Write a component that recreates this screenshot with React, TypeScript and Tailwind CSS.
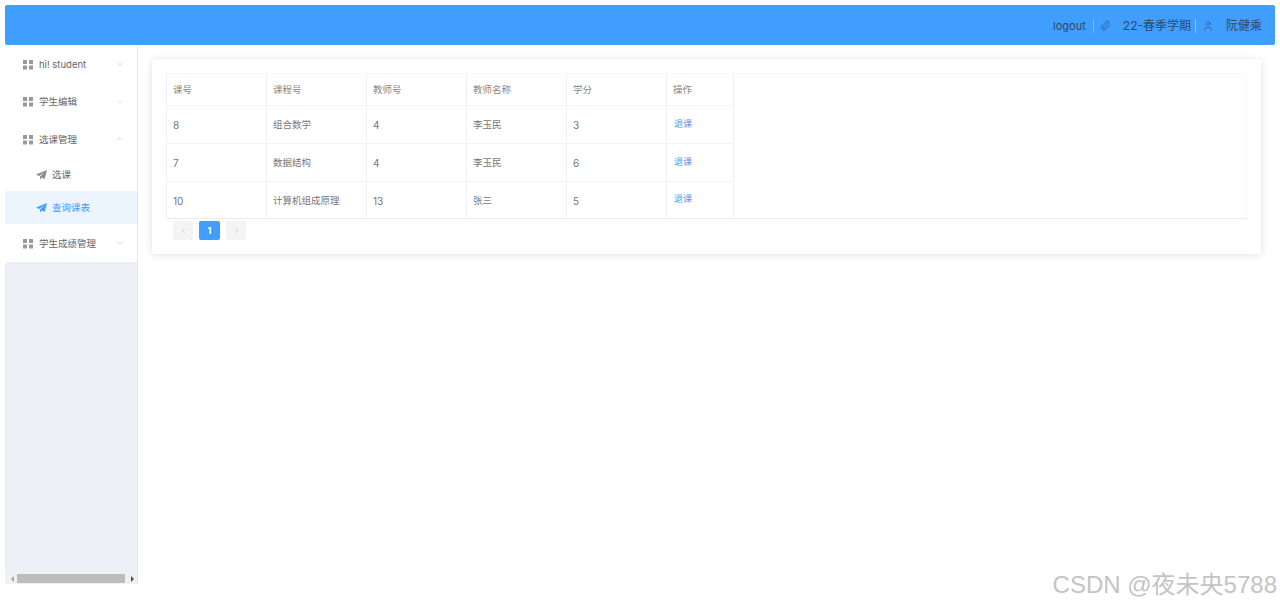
import { ChevronDown, ChevronLeft, ChevronRight, ChevronUp, Paperclip, User } from "lucide-react";
import type { ReactNode } from "react";

const font = "font-['Inter','Noto_Sans_CJK_SC',sans-serif]";

const rows = [
  { no: "8", name: "组合数学", tid: "4", teacher: "李玉民", score: "3", h: "h-[38px]" },
  { no: "7", name: "数据结构", tid: "4", teacher: "李玉民", score: "6", h: "h-[38px]" },
  { no: "10", name: "计算机组成原理", tid: "13", teacher: "张三", score: "5", h: "h-[37px]" },
];

const headers = ["课号", "课程号", "教师号", "教师名称", "学分"];

const Grid = () => (
  <svg width="11" height="11" viewBox="0 0 11 11" className="shrink-0" fill="#999">
    <rect x="0" y="1" width="4" height="4" />
    <rect x="6" y="1" width="4" height="4" />
    <rect x="0" y="6.5" width="4" height="4" />
    <rect x="6" y="6.5" width="4" height="4" />
  </svg>
);

const Plane = ({ color }: { color: string }) => (
  <svg width="11" height="11" viewBox="0 0 11 11" className="shrink-0" fill={color}>
    <path d="M11 1 L0 5.5 L3 7 L9 3 L4 7.6 L4.2 10.5 L6 8.6 L8.6 10 Z" />
  </svg>
);

const MenuGroup = ({ label, open, h }: { label: string; open?: boolean; h: string }) => (
  <div className={`flex items-center pl-[18px] pr-[12px] ${h}`}>
    <Grid />
    <span className="ml-[5px] pt-[2px] text-[9.5px] text-[#666] flex-1">{label}</span>
    {open ? (
      <ChevronUp size={10} strokeWidth={1} className="text-[#aaa]" />
    ) : (
      <ChevronDown size={10} strokeWidth={1} className="text-[#aaa]" />
    )}
  </div>
);

const SubItem = ({ label, active, h }: { label: string; active?: boolean; h: string }) => (
  <div className={`flex items-center pl-[31px] ${h} ${active ? "bg-[#ecf4fd] text-[#409eff]" : "text-[#666]"}`}>
    <Plane color={active ? "#409eff" : "#888"} />
    <span className="ml-[5px] pt-[2px] text-[9.5px]">{label}</span>
  </div>
);

const Cell = ({ children, head, digits }: { children: ReactNode; head?: boolean; digits?: boolean }) => (
  <div className={`w-[100px] h-full flex items-center pl-[6px] pt-[2px] border-l border-[#f0f1f4] ${digits ? "text-[10px]" : "text-[9.5px]"} ${head ? "text-[#888]" : "text-[#777]"}`}>
    {children}
  </div>
);

export default function App() {
  return (
    <div className={`${font} relative w-[1280px] h-[607px] overflow-hidden bg-white p-[5px] pb-[23px] flex flex-col`}>
      <header className="h-[40px] shrink-0 bg-[#409eff] rounded-[2px] flex items-center justify-end pr-[13px] pt-[1px] text-[12px] text-[#2e4a68]">
        <span className="text-[11px] pt-[2px]">logout</span>
        <span className="w-px h-[14px] bg-[#7dbcff] ml-[7px]" />
        <Paperclip size={11} strokeWidth={1.3} className="ml-[6px]" />
        <span className="ml-[12px]">22-春季学期</span>
        <span className="w-px h-[14px] bg-[#8cc4ff] ml-[4px]" />
        <User size={12} strokeWidth={1.1} className="ml-[6px]" />
        <span className="ml-[12px]">阮健乘</span>
      </header>

      <div className="flex flex-1 min-h-0">
        <aside className="w-[133px] shrink-0 bg-[#edf0f7] border-r border-[#e6e6e6] flex flex-col justify-between">
          <nav className="bg-white">
            <MenuGroup label="hi! student" h="h-[38px]" />
            <MenuGroup label="学生编辑" h="h-[37px]" />
            <MenuGroup label="选课管理" open h="h-[38px]" />
            <SubItem label="选课" h="h-[33px]" />
            <SubItem label="查询课表" active h="h-[33px]" />
            <MenuGroup label="学生成绩管理" h="h-[38px]" />
          </nav>
          <div className="h-[11px] flex items-center pl-[6px] bg-[#f1f1f1]">
            <span className="shrink-0 w-0 h-0 border-y-[3px] border-y-transparent border-r-[3px] border-r-[#a3a3a3]" />
            <span className="shrink-0 ml-[3px] w-[108px] h-[9px] bg-[#bcbcbc]" />
            <span className="shrink-0 ml-[6px] w-0 h-0 border-y-[3px] border-y-transparent border-l-[3px] border-l-[#505050]" />
          </div>
        </aside>

        <main className="flex-1 pl-[14px] pr-[14px] pt-[14px]">
          <section className="h-[195px] rounded-[3px] bg-white px-[14px] pt-[14px] shadow-[0_1px_8px_rgba(0,0,0,0.12)]">
            <div className="border-t border-r border-[#f6f7f9]">
              <div className="flex h-[31px] w-[568px]">
                {headers.map((h) => (
                  <Cell key={h} head>
                    {h}
                  </Cell>
                ))}
                <div className="w-[68px] h-full flex items-center pl-[6px] pt-[2px] border-x border-[#f0f1f4] text-[9.5px] text-[#888]">
                  操作
                </div>
              </div>
              {rows.map((r) => (
                <div key={r.no} className={`flex w-[568px] border-t border-[#f3f4f6] ${r.h}`}>
                  <Cell digits>{r.no}</Cell>
                  <Cell>{r.name}</Cell>
                  <Cell digits>{r.tid}</Cell>
                  <Cell>{r.teacher}</Cell>
                  <Cell digits>{r.score}</Cell>
                  <div className="w-[68px] h-full flex items-center pl-[7px] pb-[2px] border-x border-[#f0f1f4] text-[9px] text-[#4a9be8]">
                    退课
                  </div>
                </div>
              ))}
              <div className="h-px bg-[#e9ebef]" />
            </div>
            <div className="flex items-center mt-[2px] ml-[7px] gap-[6px]">
              <button className="w-[20px] h-[19px] rounded-[2px] bg-[#f4f4f5] flex items-center justify-center text-[#b4b8c0]">
                <ChevronLeft size={9} strokeWidth={1.5} />
              </button>
              <button className="w-[21px] h-[19px] rounded-[2px] bg-[#409eff] flex items-center justify-center text-white text-[9px] font-bold">
                1
              </button>
              <button className="w-[20px] h-[19px] rounded-[2px] bg-[#f4f4f5] flex items-center justify-center text-[#b4b8c0]">
                <ChevronRight size={9} strokeWidth={1.5} />
              </button>
            </div>
          </section>
        </main>
      </div>

      <div className="absolute right-[3px] bottom-[9px] text-[24px] leading-[26px] text-[#c4c4c4] font-['Liberation_Sans','Noto_Sans_CJK_SC',sans-serif] [text-shadow:0_1px_1px_rgba(255,255,255,0.8)]">
        CSDN @夜未央5788
      </div>
    </div>
  );
}
